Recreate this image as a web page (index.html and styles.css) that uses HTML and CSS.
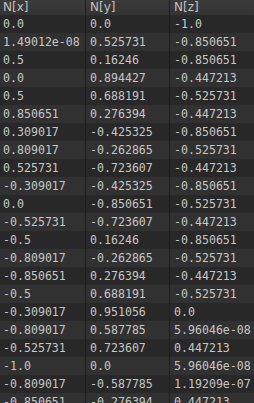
FILE: index.html
```html
<!DOCTYPE html>
<html>
<head>
<meta charset="utf-8">
<link rel="stylesheet" href="styles.css">
</head>
<body>
<div class="sheet">
  <div class="row head"><div class="cell">N[x]</div><div class="cell">N[y]</div><div class="cell">N[z]</div></div>
  <div class="row"><div class="cell">0.0</div><div class="cell">0.0</div><div class="cell">-1.0</div></div>
  <div class="row"><div class="cell">1.49012e-08</div><div class="cell">0.525731</div><div class="cell">-0.850651</div></div>
  <div class="row"><div class="cell">0.5</div><div class="cell">0.16246</div><div class="cell">-0.850651</div></div>
  <div class="row"><div class="cell">0.0</div><div class="cell">0.894427</div><div class="cell">-0.447213</div></div>
  <div class="row"><div class="cell">0.5</div><div class="cell">0.688191</div><div class="cell">-0.525731</div></div>
  <div class="row"><div class="cell">0.850651</div><div class="cell">0.276394</div><div class="cell">-0.447213</div></div>
  <div class="row"><div class="cell">0.309017</div><div class="cell">-0.425325</div><div class="cell">-0.850651</div></div>
  <div class="row"><div class="cell">0.809017</div><div class="cell">-0.262865</div><div class="cell">-0.525731</div></div>
  <div class="row"><div class="cell">0.525731</div><div class="cell">-0.723607</div><div class="cell">-0.447213</div></div>
  <div class="row"><div class="cell">-0.309017</div><div class="cell">-0.425325</div><div class="cell">-0.850651</div></div>
  <div class="row"><div class="cell">0.0</div><div class="cell">-0.850651</div><div class="cell">-0.525731</div></div>
  <div class="row"><div class="cell">-0.525731</div><div class="cell">-0.723607</div><div class="cell">-0.447213</div></div>
  <div class="row"><div class="cell">-0.5</div><div class="cell">0.16246</div><div class="cell">-0.850651</div></div>
  <div class="row"><div class="cell">-0.809017</div><div class="cell">-0.262865</div><div class="cell">-0.525731</div></div>
  <div class="row"><div class="cell">-0.850651</div><div class="cell">0.276394</div><div class="cell">-0.447213</div></div>
  <div class="row"><div class="cell">-0.5</div><div class="cell">0.688191</div><div class="cell">-0.525731</div></div>
  <div class="row"><div class="cell">-0.309017</div><div class="cell">0.951056</div><div class="cell">0.0</div></div>
  <div class="row"><div class="cell">-0.809017</div><div class="cell">0.587785</div><div class="cell">5.96046e-08</div></div>
  <div class="row"><div class="cell">-0.525731</div><div class="cell">0.723607</div><div class="cell">0.447213</div></div>
  <div class="row"><div class="cell">-1.0</div><div class="cell">0.0</div><div class="cell">5.96046e-08</div></div>
  <div class="row"><div class="cell">-0.809017</div><div class="cell">-0.587785</div><div class="cell">1.19209e-07</div></div>
  <div class="row"><div class="cell">-0.850651</div><div class="cell">-0.276394</div><div class="cell">0.447213</div></div>
</div>
</body>
</html>
```
FILE: styles.css
```css
html, body {
  margin: 0;
  padding: 0;
  background: #282828;
  overflow: hidden;
}
.sheet {
  width: 254px;
  height: 403px;
  overflow: hidden;
  display: flex;
  flex-direction: column;
}
.row {
  display: grid;
  grid-template-columns: 86px 84px 84px;
  height: 18px;
  flex: none;
  background: #282828;
  font-family: "DejaVu Sans Mono", monospace;
  font-size: 11.6px;
  line-height: 18px;
  color: #c6c6c6;
}
.row:nth-child(odd) {
  background: #313131;
}
.row.head {
  height: 15px;
  line-height: 15px;
  background: linear-gradient(#3b3b3b, #333333);
  font-family: "DejaVu Sans", sans-serif;
  font-size: 12px;
  color: #c0c0c0;
}
.cell {
  padding-left: 4px;
  white-space: nowrap;
  overflow: hidden;
  border-right: 1px solid #1e1e1e;
}
.cell:first-child {
  padding-left: 3px;
}
.cell:last-child {
  border-right: none;
}
```
